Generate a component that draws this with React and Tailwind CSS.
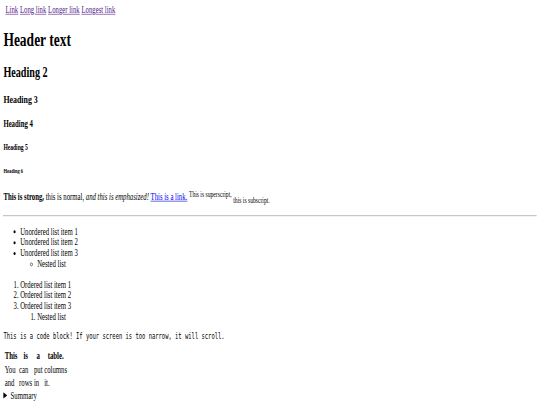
export default function App() {
  return (
    <div className="w-[540px] h-[405px] overflow-hidden bg-white">
      <div className="w-[1280px] h-[672px] origin-top-left [transform:scale(0.421875,0.603)] p-[8px] font-['Liberation_Serif',serif] text-[16px] leading-[normal] text-black">
        <nav className="pl-[5px]">
          <a href="#" className="text-[#551a8b] underline">Link</a>{" "}
          <a href="#" className="text-[#551a8b] underline">Long link</a>{" "}
          <a href="#" className="text-[#551a8b] underline">Longer link</a>{" "}
          <a href="#" className="text-[#551a8b] underline">Longest link</a>
        </nav>
        <h1 className="text-[32px] font-bold my-[21.44px]">Header text</h1>
        <h2 className="text-[24px] font-bold my-[19.92px]">Heading 2</h2>
        <h3 className="text-[18.72px] font-bold my-[18.72px]">Heading 3</h3>
        <h4 className="text-[16px] font-bold my-[21.28px]">Heading 4</h4>
        <h5 className="text-[13.28px] font-bold my-[22.18px]">Heading 5</h5>
        <h6 className="text-[10.72px] font-bold my-[24.97px]">Heading 6</h6>
        <p className="my-[16px]">
          <strong className="font-bold">This is strong,</strong> this is normal,{" "}
          <em className="italic">and this is emphasized!</em>{" "}
          <a href="#" className="text-[#0000ee] underline">This is a link.</a>{" "}
          <sup className="static align-super text-[13.33px] leading-[normal]">This is superscript,</sup>{" "}
          <sub className="static align-sub text-[13.33px] leading-[normal]">this is subscript.</sub>
        </p>
        <hr className="my-[8px] h-0 border border-t-[#9a9a9a] border-l-[#9a9a9a] border-b-[#e6e6e6] border-r-[#e6e6e6]" />
        <ul className="my-[16px] pl-[40px] list-disc">
          <li>Unordered list item 1</li>
          <li>Unordered list item 2</li>
          <li>
            Unordered list item 3
            <ul className="pl-[40px] list-[circle]">
              <li>Nested list</li>
            </ul>
          </li>
        </ul>
        <ol className="my-[16px] pl-[40px] list-decimal">
          <li>Ordered list item 1</li>
          <li>Ordered list item 2</li>
          <li>
            Ordered list item 3
            <ol className="pl-[40px] list-decimal">
              <li>Nested list</li>
            </ol>
          </li>
        </ol>
        <pre className="my-[13px] font-['DejaVu_Sans_Mono',monospace] text-[13px] leading-[normal]">This is a code block! If your screen is too narrow, it will scroll.</pre>
        <table className="border-separate border-spacing-[2px]">
          <thead>
            <tr>
              <th className="p-[1px] font-bold text-center">This</th>
              <th className="p-[1px] font-bold text-center">is</th>
              <th className="p-[1px] font-bold text-center">a</th>
              <th className="p-[1px] font-bold text-center">table.</th>
            </tr>
          </thead>
          <tbody>
            <tr>
              <td className="p-[1px]">You</td>
              <td className="p-[1px]">can</td>
              <td className="p-[1px]">put</td>
              <td className="p-[1px]">columns</td>
            </tr>
            <tr>
              <td className="p-[1px]">and</td>
              <td className="p-[1px]">rows</td>
              <td className="p-[1px]">in</td>
              <td className="p-[1px]">it.</td>
            </tr>
          </tbody>
        </table>
        <details>
          <summary>Summary</summary>
          <p>Details content.</p>
        </details>
      </div>
    </div>
  );
}
